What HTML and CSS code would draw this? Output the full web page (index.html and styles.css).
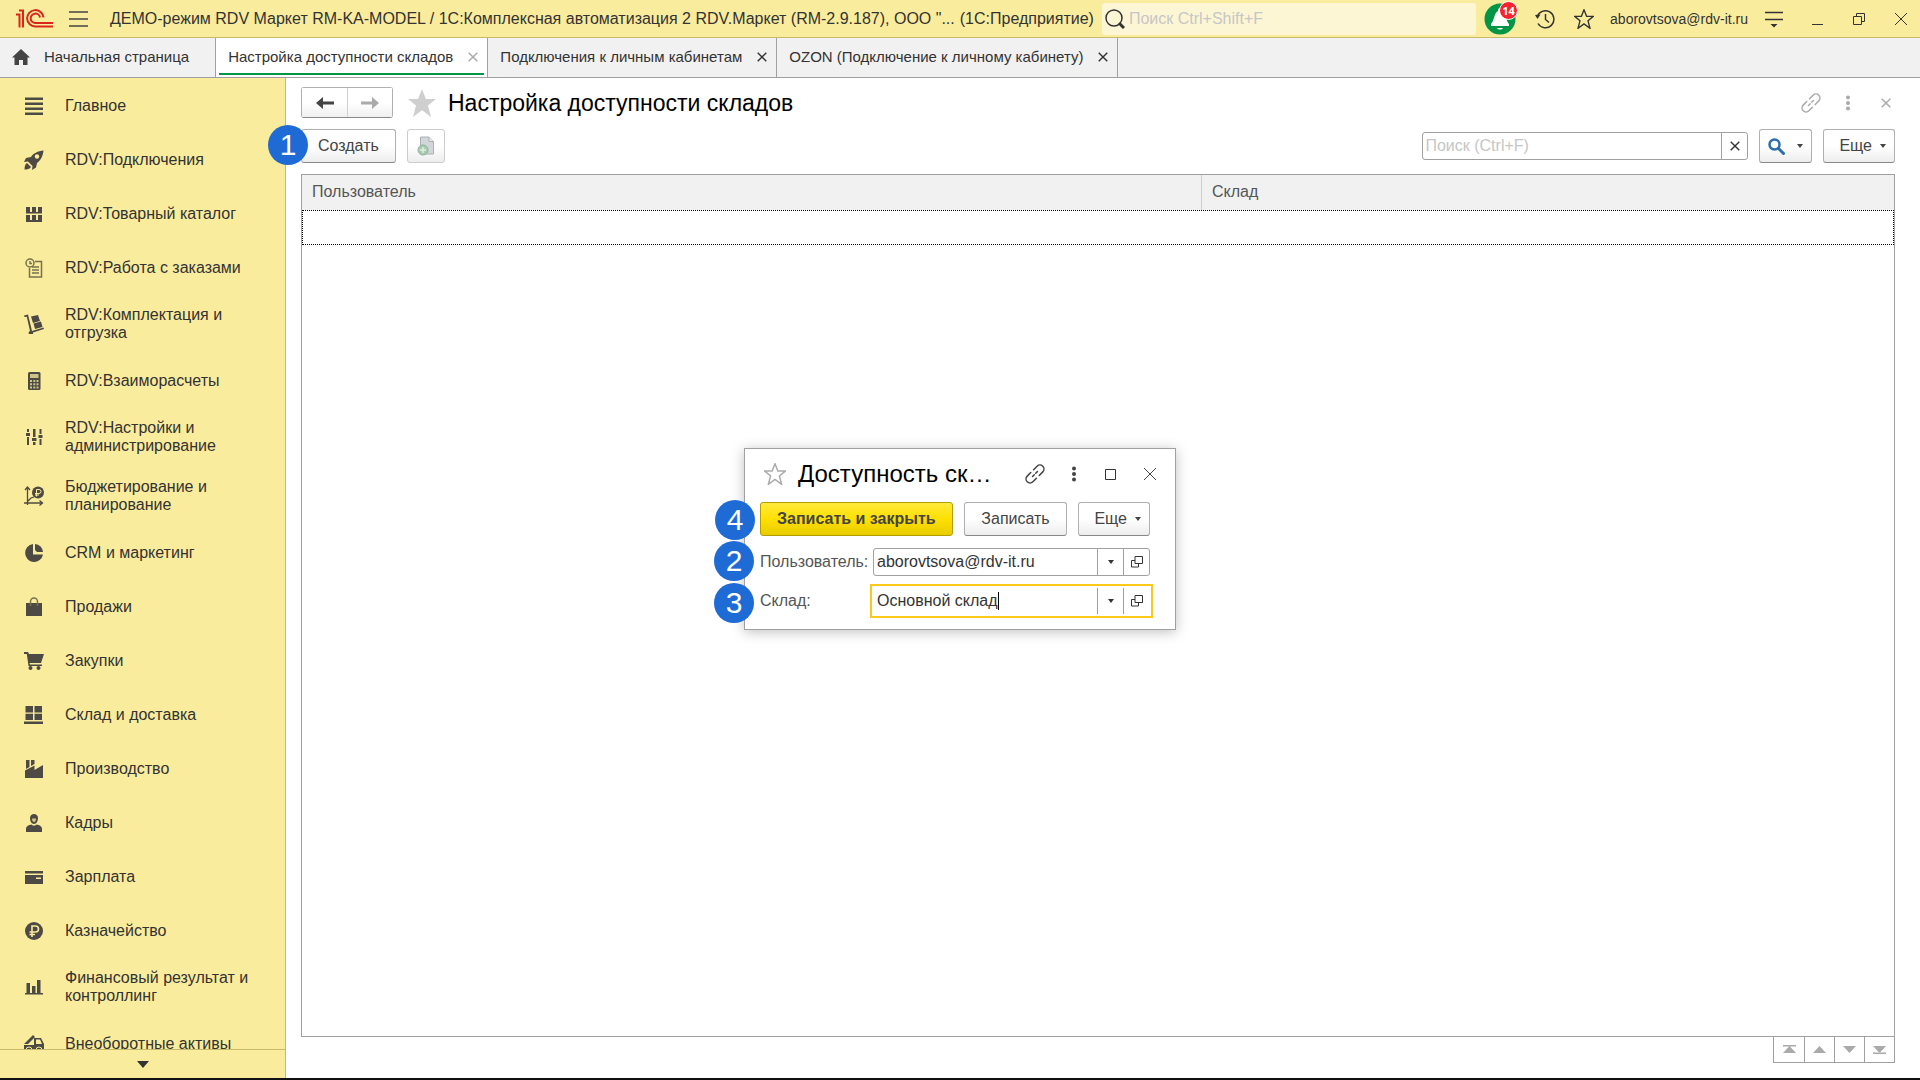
FILE: index.html
```html
<!DOCTYPE html>
<html lang="ru">
<head>
<meta charset="utf-8">
<title>Настройка доступности складов</title>
<meta name="viewport" content="width=device-width, initial-scale=1">
<link rel="stylesheet" href="styles.css">
</head>
<body>
<svg class="defs" aria-hidden="true">
  <symbol id="close" viewBox="0 0 14 14"><path d="M1 1l12 12M13 1L1 13" fill="none" stroke="currentColor"/></symbol>
  <symbol id="link" viewBox="0 0 20 20"><g fill="none" stroke="currentColor" stroke-width="1.500" stroke-linecap="round" transform="rotate(-45 10 10)"><path d="M8 6H3a4 4 0 0 0 0 8h5M12 6h5a4 4 0 0 1 0 8h-5M6.500 10h2.500M11 10h2.500"/></g></symbol>
  <symbol id="dots" viewBox="0 0 6 16"><circle cx="3" cy="2.500" r="2"/><circle cx="3" cy="8" r="2"/><circle cx="3" cy="13.500" r="2"/></symbol>
  <symbol id="caret" viewBox="0 0 6 4"><path d="M0 0h6L3 4z"/></symbol>
  <symbol id="star" viewBox="0 0 30 30"><path d="M15 1l3.900 10H29l-8 6.600L24 29l-9-6.700L6 29l3-11.400L1 11h10.100z"/></symbol>
  <symbol id="open" viewBox="0 0 14 14"><path d="M5 1.500h7.500v7H5zM5 5.500H1.500v6.500H8.500V8.500" fill="none" stroke="currentColor"/></symbol>
</svg>

<header class="topbar">
  <svg class="logo" viewBox="0 0 38 20"><g fill="none" stroke="#d9261c" stroke-width="2"><path d="M0 5.500h3.500V18.500M3 1.500h4V18.500"/><path d="M37 17.500H19.500a8.200 8.200 0 1 1 8-9"/><path d="M37 14H19.500a4.700 4.700 0 1 1 4.500-5.500"/></g></svg>
  <button class="bare menu" aria-label="Меню"><svg viewBox="0 0 19 16"><path d="M0 1h19M0 8h19M0 15h19" stroke="#444" stroke-width="1.400"/></svg></button>
  <div class="app-title">ДЕМО-режим RDV Маркет RM-KA-MODEL / 1С:Комплексная автоматизация 2 RDV.Маркет (RM-2.9.187), ООО "...</div>
  <div class="app-kind">(1С:Предприятие)</div>
  <label class="global-search">
    <svg viewBox="0 0 20 20"><circle cx="9" cy="9" r="8" fill="none" stroke="#333" stroke-width="1.500"/><path d="M14 14l5 5" stroke="#333" stroke-width="3"/></svg>
    <input type="text" placeholder="Поиск Ctrl+Shift+F" aria-label="Поиск">
  </label>
  <div class="top-tools">
    <button class="bare bell" aria-label="Уведомления"><svg viewBox="0 0 32 32"><circle cx="16" cy="16" r="15.500" fill="#009646"/><path d="M16 5c2 0 2 2 2 3 4 2 3.500 9 7 13v2H7v-2c3.500-4 3-11 7-13 0-1 0-3 2-3zM13 25h6c-1 2-5 2-6 0z" fill="#fff"/></svg><span class="count">14</span></button>
    <button class="bare" aria-label="История"><svg class="i20" viewBox="0 0 20 20"><g fill="none" stroke="#333" stroke-width="1.500"><path d="M2.200 8A8.500 8.500 0 1 1 3 14.500"/><path d="M10.500 5v5.500l3.500 3"/></g><path d="M0 6l5.500-.5L2.500 10z" fill="#333"/></svg></button>
    <button class="bare" aria-label="Избранное"><svg class="i20" viewBox="0 0 30 30"><use href="#star" fill="none" stroke="#333" stroke-width="2"/></svg></button>
    <a class="user" href="#">aborovtsova@rdv-it.ru</a>
    <button class="bare" aria-label="Настройки"><svg class="i20" viewBox="0 0 20 20"><path d="M1 3.500h18M1 10.500h18" stroke="#333" stroke-width="1.500"/><path d="M6.500 15h7L10 18.500z" fill="#333"/></svg></button>
  </div>
  <div class="win-tools">
    <button class="bare" aria-label="Свернуть"><svg class="i14" viewBox="0 0 14 14"><path d="M2 12.500h11" stroke="#333"/></svg></button>
    <button class="bare" aria-label="Развернуть"><svg class="i14" viewBox="0 0 14 14"><path d="M1.500 4.500h8v8h-8zM4.500 4.500v-3h8v8h-3" fill="none" stroke="#333"/></svg></button>
    <button class="bare" aria-label="Закрыть"><svg class="i14"><use href="#close"/></svg></button>
  </div>
</header>

<nav class="tabs" aria-label="Открытые окна">
  <a class="tab home" href="#"><svg viewBox="0 0 18 16"><path d="M9 0l9 8.500h-2.500V16H11v-5H7v5H2.500V8.500H0z" fill="#444"/></svg>Начальная страница</a>
  <a class="tab active" href="#">Настройка доступности складов<svg class="x"><use href="#close"/></svg></a>
  <a class="tab" href="#">Подключения к личным кабинетам<svg class="x"><use href="#close"/></svg></a>
  <a class="tab" href="#">OZON (Подключение к личному кабинету)<svg class="x"><use href="#close"/></svg></a>
</nav>

<div class="workspace">
  <aside class="sidebar">
    <nav class="sections" aria-label="Разделы">
      <a href="#"><svg viewBox="0 0 20 20"><path d="M1 1.500h18v2.400H1zM1 6.500h18v2.400H1zM1 11.500h18v2.400H1zM1 16.500h18v2.400H1z"/></svg><span>Главное</span></a>
      <a href="#"><svg viewBox="0 0 20 20"><path d="M19.500.5C14 1 9 3.500 7 7L2 8 0 12l4-.5 4.500 4.500-.5 4 4-2.500 1-4.500C16.500 10.500 19 6 19.500.5zM3 13c-2 1-2.500 4-2.500 6.500C3 19.500 6 19 7 17z"/><circle cx="13" cy="6.500" r="2.200" fill="#faec9d"/></svg><span>RDV:Подключения</span></a>
      <a href="#"><svg viewBox="0 0 20 20"><path d="M2 3h4v5H2zM8 3h4v5H8zM14 3h4v5h-4zM2 11h4v5H2zM8 11h4v5H8zM14 11h4v5h-4zM2 8h16v1.500H2zM2 16h16v2H2z"/></svg><span>RDV:Товарный каталог</span></a>
      <a href="#"><svg viewBox="0 0 20 20"><g fill="none" stroke="#77714f" stroke-width="1.500"><circle cx="6" cy="5" r="4"/><path d="M6 3v2.500h2M11 3.500h6.500v15.500H5.500V10M8 9h7M8 12h7M8 15h7"/></g></svg><span>RDV:Работа с заказами</span></a>
      <a href="#"><svg viewBox="0 0 20 20"><path d="M0 1.500L4 .5 8 17l11.500-3.500.5 1.500-11 3.500a2.200 2.200 0 1 1-3-1.500L2.800 2.700.5 3z"/><path d="M7 2.500L14 1l2 6-7 2zM9.500 9.500l7.500-2 1.500 5.500-7.500 2z"/></svg><span>RDV:Комплектация и отгрузка</span></a>
      <a href="#"><svg viewBox="0 0 20 20"><rect x="4" y="1" width="12.500" height="18" rx="1.500"/><path d="M6 3h8.500v4H6zM6 9h2v2H6zM9.300 9h2v2h-2zM12.500 9h2v2h-2zM6 12.200h2v2H6zM9.300 12.200h2v2h-2zM12.500 12.200h2v2h-2zM6 15.400h2v2H6zM9.300 15.400h2v2h-2zM12.500 15.400h2v2h-2z" fill="#cfc486"/></svg><span>RDV:Взаиморасчеты</span></a>
      <a href="#"><svg viewBox="0 0 20 20"><path d="M3 2h2v3H3zM2 6h4v3H2zM3 10h2v8H3zM9 2h2.500v8H9zM8 11h4.500v3H8zM9 15h2.500v3H9zM15.500 2h2v5h-2zM14.500 8h4v3h-4zM15.500 12h2v6h-2z"/></svg><span>RDV:Настройки и администрирование</span></a>
      <a href="#"><svg viewBox="0 0 20 20"><path d="M3.500 19V2M1 4l2.500-3L6 4M0 17h18M15.500 14.500L18.500 17l-3 2.500M4 15l3-3 3-1" fill="none" stroke="#4d4a40" stroke-width="1.300"/><circle cx="14" cy="6.500" r="6"/><path d="M12.500 10.500v-7h2.500a2 2 0 0 1 0 4h-4M11 9h4" fill="none" stroke="#faec9d"/></svg><span>Бюджетирование и планирование</span></a>
      <a href="#"><svg viewBox="0 0 20 20"><path d="M9 1a9 9 0 1 0 10 10.500H9z"/><path d="M11 1a8.500 8.500 0 0 1 8 8h-6l-2-2z"/></svg><span>CRM и маркетинг</span></a>
      <a href="#"><svg viewBox="0 0 20 20"><path d="M2 6h16v13H2z"/><path d="M6.500 9V4.500a3.500 3.500 0 0 1 7 0V9" fill="none" stroke="#77714f" stroke-width="1.500"/></svg><span>Продажи</span></a>
      <a href="#"><svg viewBox="0 0 20 20"><path d="M0 1h4l1 2h15l-3 9H5.500l.5 1.500h12V15H4.500L2.800 3H0z"/><circle cx="6.500" cy="17" r="2"/><circle cx="14.500" cy="17" r="2"/></svg><span>Закупки</span></a>
      <a href="#"><svg viewBox="0 0 20 20"><path d="M1.500 1h7.500v6.500H1.500zM10.500 1H18v6.500h-7.500zM1.500 8.700h7.500V15H1.500zM10.500 8.700H18V15h-7.500zM0 16.500h19V19H0z"/></svg><span>Склад и доставка</span></a>
      <a href="#"><svg viewBox="0 0 20 20"><path d="M2 1h3.500v7L2 10zM7 1h3.500v4L7 7zM1 11.500l9.500-5V11L19 6v13H1z"/></svg><span>Производство</span></a>
      <a href="#"><svg viewBox="0 0 20 20"><path d="M6 5c0-5.500 8-5.500 8 0 0 3-1.500 6-4 6S6 8 6 5zM2 16c0-3 3-4 5.500-4.500 1 1.500 4 1.500 5 0C15 12 18 13 18 16v3H2z"/><path d="M8 5.500h4c0 2-.8 3.500-2 3.500s-2-1.500-2-3.500z" fill="#cfc486"/></svg><span>Кадры</span></a>
      <a href="#"><svg viewBox="0 0 20 20"><path d="M1 4h18v2.500H1zM1 8h18v9H1z"/><path d="M12 10.500h5V12h-5z" fill="#faec9d"/></svg><span>Зарплата</span></a>
      <a href="#"><svg viewBox="0 0 20 20"><circle cx="10" cy="10" r="9"/><path d="M8 16V5h3.500a3 3 0 0 1 0 6H5.500M5.500 13.500H11" fill="none" stroke="#faec9d" stroke-width="1.600"/></svg><span>Казначейство</span></a>
      <a href="#"><svg viewBox="0 0 20 20"><path d="M2.500 6H6v10H2.500zM8 9h3.500v7H8zM13 3h3.500v13H13zM1 16h18v1.500H1z"/></svg><span>Финансовый результат и контроллинг</span></a>
      <a href="#"><svg viewBox="0 0 20 20"><path d="M0 10L9 1l2 2-7 7M2 12L10 4M0 11h10V4h7l3 6v6H0z"/><path d="M12 5.500h4l2 4.500h-6z" fill="#faec9d"/><circle cx="5" cy="16" r="3" stroke="#faec9d"/><circle cx="15" cy="16" r="3" stroke="#faec9d"/></svg><span>Внеоборотные активы</span></a>
    </nav>
    <button class="bare more" aria-label="Прокрутить вниз"><svg viewBox="0 0 12 7"><path d="M0 0h12L6 7z" fill="#333"/></svg></button>
  </aside>

  <main class="page">
    <div class="page-head">
      <div class="history">
        <button aria-label="Назад"><svg viewBox="0 0 18 12"><path d="M7 0v4.500h11v3H7V12L0 6z" fill="#444"/></svg></button>
        <button aria-label="Вперед" disabled><svg viewBox="0 0 18 12"><path d="M11 0v4.500H0v3h11V12l7-6z" fill="#aaa"/></svg></button>
      </div>
      <button class="bare fav" aria-label="В избранное"><svg><use href="#star"/></svg></button>
      <h1>Настройка доступности складов</h1>
      <div class="page-tools">
        <button class="bare" aria-label="Ссылка"><svg class="i20"><use href="#link"/></svg></button>
        <button class="bare" aria-label="Дополнительно"><svg class="dots"><use href="#dots"/></svg></button>
        <button class="bare" aria-label="Закрыть"><svg class="x"><use href="#close"/></svg></button>
      </div>
    </div>

    <div class="commands">
      <div class="create"><button class="btn">Создать</button><b class="mark">1</b></div>
      <button class="btn copy" aria-label="Скопировать" disabled><svg viewBox="0 0 18 20"><path d="M3.500 1H12l4.500 4.500V18h-13z" fill="#d2d6da" stroke="#aab0b5"/><path d="M12 1v4.500h4.500" fill="#eee" stroke="#aab0b5"/><circle cx="6" cy="14" r="5" fill="#a9cbb0" stroke="#8fb39a"/><path d="M6 11v6M3 14h6" stroke="#e4efe6" stroke-width="1.300"/></svg></button>
      <div class="find">
        <input type="text" placeholder="Поиск (Ctrl+F)" aria-label="Поиск">
        <button aria-label="Очистить"><svg class="x"><use href="#close"/></svg></button>
      </div>
      <button class="btn lens" aria-label="Найти"><svg class="glass" viewBox="0 0 17 17"><circle cx="6.500" cy="6.500" r="5" fill="none" stroke="#2a6fa8" stroke-width="2.500"/><path d="M10.500 10.500l5 5" stroke="#2a6fa8" stroke-width="3" stroke-linecap="round"/></svg><svg class="caret"><use href="#caret"/></svg></button>
      <button class="btn drop">Еще<svg class="caret"><use href="#caret"/></svg></button>
    </div>

    <div class="grid">
      <table>
        <thead><tr><th class="col-user">Пользователь</th><th>Склад</th></tr></thead>
        <tbody><tr><td></td><td></td></tr></tbody>
      </table>
    </div>
    <div class="pager">
      <button aria-label="В начало"><svg viewBox="0 0 13 9"><path d="M0 0h13v1.500H0zM6.500 1L13 8H0z"/></svg></button>
      <button aria-label="Вверх"><svg viewBox="0 0 13 9"><path d="M6.500 1L13 8H0z"/></svg></button>
      <button aria-label="Вниз"><svg viewBox="0 0 13 9"><path d="M6.500 8L13 1H0z"/></svg></button>
      <button aria-label="В конец"><svg viewBox="0 0 13 9"><path d="M0 7.500h13V9H0zM6.500 8L13 1H0z"/></svg></button>
    </div>
  </main>
</div>

<section class="dialog" role="dialog" aria-labelledby="dialog-title">
  <div class="dialog-head">
    <button class="bare dialog-fav" aria-label="В избранное"><svg viewBox="0 0 30 30"><use href="#star"/></svg></button>
    <h2 id="dialog-title">Доступность ск…</h2>
    <button class="bare" aria-label="Ссылка"><svg class="i20"><use href="#link"/></svg></button>
    <button class="bare" aria-label="Дополнительно"><svg class="dots"><use href="#dots"/></svg></button>
    <button class="bare" aria-label="Развернуть"><svg class="i14" viewBox="0 0 14 14"><path d="M2.500 2.500h10v10h-10z" fill="none" stroke="#333"/></svg></button>
    <button class="bare" aria-label="Закрыть"><svg class="i14"><use href="#close"/></svg></button>
  </div>
  <div class="dialog-commands">
    <button class="btn primary">Записать и закрыть</button>
    <button class="btn">Записать</button>
    <button class="btn drop">Еще<svg class="caret"><use href="#caret"/></svg></button>
  </div>
  <div class="row">
    <label for="user">Пользователь:</label>
    <div class="field"><input id="user" type="text" value="aborovtsova@rdv-it.ru"><button aria-label="Выбрать"><svg class="caret"><use href="#caret"/></svg></button><button aria-label="Открыть"><svg class="i14"><use href="#open"/></svg></button></div>
  </div>
  <div class="row">
    <label for="store">Склад:</label>
    <div class="field focused"><span class="typed"><input id="store" type="text" value="Основной склад"><i class="cursor"></i></span><button aria-label="Выбрать"><svg class="caret"><use href="#caret"/></svg></button><button aria-label="Открыть"><svg class="i14"><use href="#open"/></svg></button></div>
  </div>
  <b class="mark four">4</b>
  <b class="mark two">2</b>
  <b class="mark three">3</b>
</section>
</body>
</html>
```
FILE: styles.css
```css
* { box-sizing: border-box; }

body {
  margin: 0;
  height: 100vh;
  display: flex;
  flex-direction: column;
  overflow: hidden;
  border-bottom: 2px solid #111;
  background: #fff;
  color: #333;
  font: 16px/18px "Liberation Sans", Arial, sans-serif;
}

button, input { font: inherit; color: inherit; }
button { padding: 0; }
svg { display: block; fill: currentColor; }
a { color: inherit; text-decoration: none; }
h1, h2 { margin: 0; line-height: 28px; font-weight: 400; color: #000; }
h1 { font-size: 23px; }
h2 { font-size: 24px; }

.defs { position: absolute; width: 0; height: 0; }
.i20 { width: 20px; height: 20px; }
.i14 { width: 14px; height: 14px; }
.x { width: 10px; height: 10px; stroke-width: 2; }
.dots { width: 6px; height: 16px; }
.caret { width: 6px; height: 4px; }
.bare { display: flex; align-items: center; justify-content: center; border: 0; background: none; }

/* Title bar */
.topbar {
  flex: none;
  height: 38px;
  display: flex;
  align-items: center;
  padding: 0 12px 0 16px;
  background: #faec9d;
  border-bottom: 1px solid #c8ba6a;
}
.logo { width: 38px; height: 20px; margin-right: 15px; }
.menu svg { width: 19px; height: 16px; }
.app-title { margin-left: 22px; white-space: nowrap; }
.app-kind { margin: 0 8px 0 5px; white-space: nowrap; }
.global-search {
  flex: 1;
  height: 32px;
  display: flex;
  align-items: center;
  gap: 4px;
  padding-left: 3px;
  background: #fdf6d5;
  border-radius: 3px;
}
.global-search svg { width: 20px; height: 20px; }
.global-search input { flex: 1; min-width: 0; padding: 0; border: 0; background: none; outline: 0; }
input::placeholder { color: #c6c6c6; opacity: 1; }
.top-tools { display: flex; align-items: center; gap: 16px; margin-left: 8px; }
.bell { position: relative; }
.bell svg { width: 32px; height: 32px; }
.count {
  position: absolute;
  top: -2px;
  left: 15px;
  width: 19px;
  height: 19px;
  border: 1px solid #fff;
  border-radius: 50%;
  background: #f8232c;
  color: #fff;
  font: 700 11px/17px "Open Sans", sans-serif;
}
.top-tools .bare + .bare { margin-left: 3px; }
.user { font-size: 14px; }
.win-tools { display: flex; gap: 28px; margin-left: 26px; }

/* Window tabs */
.tabs {
  flex: none;
  height: 40px;
  display: flex;
  background: #f1f1f1;
  border-bottom: 1px solid #a0a0a0;
  font-size: 15px;
}
.tab {
  display: flex;
  align-items: center;
  gap: 15px;
  padding: 0 9px 1px 12px;
  border-right: 1px solid #a0a0a0;
  white-space: nowrap;
}
.home { gap: 14px; padding-right: 26px; }
.home svg { width: 18px; height: 16px; }
.active { background: linear-gradient(#009646, #009646) center 35px / calc(100% - 6px) 2px no-repeat #fff; }
.active .x { color: #aaa; }

/* Sections panel */
.workspace { flex: 1; min-height: 0; display: flex; }
.sidebar {
  flex: none;
  width: 286px;
  display: flex;
  flex-direction: column;
  background: #faec9d;
  border-right: 1px solid #c8ba6a;
}
.sections { flex: 1; min-height: 0; overflow: hidden; }
.sections a {
  min-height: 54px;
  display: flex;
  align-items: center;
  gap: 21px;
  padding: 12px 30px 11px 24px;
}
.sections svg { flex: none; width: 20px; height: 20px; fill: #4d4a45; }
.more { flex: none; height: 29px; border-top: 1px solid #c8ba6a; }
.more svg { width: 12px; height: 7px; }

/* List form */
.page {
  flex: 1;
  min-width: 0;
  display: flex;
  flex-direction: column;
  padding: 9px 25px 15px 15px;
}
.page-head { display: flex; align-items: center; height: 31px; }
.history { display: flex; border: 1px solid #b0b0b0; border-bottom-color: #888; border-radius: 3px; }
.history button {
  width: 45px;
  height: 29px;
  display: flex;
  align-items: center;
  justify-content: center;
  border: 0;
  background: linear-gradient(#fff 50%, #f0f0f0);
}
.history button + button { border-left: 1px solid #d0d0d0; }
.history svg { width: 18px; height: 12px; }
.fav { margin: 0 11px 0 14px; color: #cfcfcf; }
.fav svg { width: 30px; height: 30px; }
.page-tools { display: flex; gap: 24px; margin: 0 4px 0 auto; color: #aaa; }
.page-tools button:last-child { margin-left: 6px; }

.commands { display: flex; align-items: center; gap: 11px; height: 34px; margin: 11px 0; }
.create { position: relative; display: flex; }
.btn {
  height: 34px;
  padding: 0 16px;
  border: 1px solid #b0b0b0;
  border-bottom-color: #888;
  border-radius: 3px;
  background: linear-gradient(#fff 50%, #ededed);
  color: #444;
  white-space: nowrap;
}
.drop, .lens { display: flex; align-items: center; gap: 8px; padding: 0 8px 0 15px; }
.copy { padding: 0 9px; border-color: #ccc; }
.copy svg { width: 18px; height: 20px; }
.lens { gap: 12px; padding: 0 8px; }
.glass { width: 17px; height: 17px; }
.find {
  width: 326px;
  height: 28px;
  display: flex;
  margin-left: auto;
  border: 1px solid #a0a0a0;
  border-radius: 3px;
}
.find input { flex: 1; min-width: 0; padding: 0 2px; border: 0; background: none; outline: 0; }
.find button, .field button {
  flex: none;
  width: 26px;
  display: flex;
  align-items: center;
  justify-content: center;
  border: 0;
  border-left: 1px solid #a0a0a0;
  background: none;
}

.grid { flex: 1; min-height: 0; border: 1px solid #a0a0a0; }
table { width: 100%; border-collapse: collapse; table-layout: fixed; }
th {
  height: 35px;
  padding: 0 10px 2px;
  background: #f1f1f1;
  border-left: 1px solid #d0d0d0;
  text-align: left;
  font-weight: 400;
  color: #555;
}
th:first-child { border-left: 0; }
.col-user { width: 56.5%; }
tbody tr { height: 35px; outline: 1px dotted #000; outline-offset: -1px; }
td { padding: 0; }

.pager { display: flex; align-self: flex-end; border: 1px solid #a0a0a0; border-top: 0; }
.pager button {
  width: 30px;
  height: 25px;
  display: flex;
  align-items: center;
  justify-content: center;
  border: 0;
  background: none;
  color: #aaa;
}
.pager button + button { border-left: 1px solid #a0a0a0; }
.pager svg { width: 13px; height: 9px; }

/* Numbered callouts */
.mark {
  position: absolute;
  width: 40px;
  height: 40px;
  border-radius: 50%;
  background: #1e6bd6;
  color: #fff;
  font: 400 30px/40px "Liberation Sans", Arial, sans-serif;
  text-align: center;
}
.create .mark { top: -4px; left: -33px; }
.four { top: 51px; left: -30px; }
.two { top: 92px; left: -31px; }
.three { top: 134px; left: -31px; }

/* Item form */
.dialog {
  position: absolute;
  top: 448px;
  left: calc(50% - 216px);
  width: 432px;
  padding: 10px 25px 9px 15px;
  background: #fff;
  border: 1px solid #a0a0a0;
  box-shadow: 0 2px 12px rgba(0, 0, 0, .25);
}
.dialog-head { display: flex; align-items: center; gap: 26px; height: 30px; margin: 0 -7px 13px 0; }
.dialog-head h2 { flex: 1; margin: 0 -6px 0 -14px; white-space: nowrap; }
.dialog-fav svg { width: 22px; height: 22px; margin-left: 4px; fill: none; stroke: #aaa; stroke-width: 2; }
.dialog-head .bare { color: #444; }
.dialog-commands { display: flex; justify-content: space-between; margin-bottom: 6px; }
.primary {
  border-color: #b39e00;
  background: linear-gradient(#ffea3d, #ffe000 50%, #e8cc00);
  color: #444;
  font-weight: 700;
}
.row { display: flex; align-items: center; height: 39px; }
.row label { width: 113px; color: #555; white-space: nowrap; }
.field {
  flex: 1;
  min-width: 0;
  height: 28px;
  display: flex;
  border: 1px solid #a0a0a0;
  border-radius: 3px;
}
.field input { flex: 1; min-width: 0; padding: 0 3px; border: 0; background: none; outline: 0; }
.focused {
  height: 34px;
  margin: 0 -3px;
  padding: 2px;
  border: 2px solid #fbc91c;
  border-radius: 0;
}
.typed { flex: 1; min-width: 0; display: flex; align-items: center; }
.typed input { flex: none; field-sizing: content; padding-right: 0; }
.cursor { width: 1px; height: 18px; background: #000; }
```
